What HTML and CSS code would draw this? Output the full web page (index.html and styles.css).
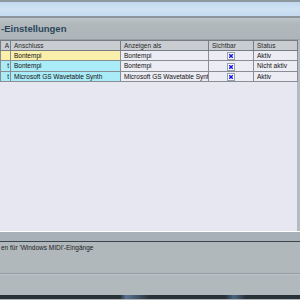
FILE: index.html
```html
<!DOCTYPE html>
<html lang="de">
<head>
    <meta charset="UTF-8">
    <title>MIDI-Einstellungen</title>
    <link rel="stylesheet" href="styles.css">
</head>
<body>

    <div class="window">
        <div class="top-strip"></div>
        <div class="title-bar"></div>
        <div class="heading">-Einstellungen</div>

        <div class="list-area">
            <table class="ports">
                <colgroup>
                    <col class="c-a">
                    <col class="c-port">
                    <col class="c-name">
                    <col class="c-vis">
                    <col class="c-state">
                </colgroup>
                <tr class="head">
                    <th class="clip">A</th>
                    <th>Anschluss</th>
                    <th>Anzeigen als</th>
                    <th>Sichtbar</th>
                    <th>Status</th>
                </tr>
                <tr class="yellow">
                    <td class="clip"></td>
                    <td>Bontempi</td>
                    <td class="plain">Bontempi</td>
                    <td class="plain check"><svg class="box" viewBox="0 0 8 8"><rect x="0.5" y="0.5" width="7" height="7" fill="#fff" stroke="#98a0aa"/><path d="M2.2 2.2L5.8 5.8M5.8 2.2L2.2 5.8" stroke="#1414e6" stroke-width="1.5"/></svg></td>
                    <td class="plain">Aktiv</td>
                </tr>
                <tr class="cyan">
                    <td class="clip">t</td>
                    <td>Bontempi</td>
                    <td class="plain">Bontempi</td>
                    <td class="plain check"><svg class="box" viewBox="0 0 8 8"><rect x="0.5" y="0.5" width="7" height="7" fill="#fff" stroke="#98a0aa"/><path d="M2.2 2.2L5.8 5.8M5.8 2.2L2.2 5.8" stroke="#1414e6" stroke-width="1.5"/></svg></td>
                    <td class="plain">Nicht aktiv</td>
                </tr>
                <tr class="cyan">
                    <td class="clip">t</td>
                    <td>Microsoft GS Wavetable Synth</td>
                    <td class="plain">Microsoft GS Wavetable Synth</td>
                    <td class="plain check"><svg class="box" viewBox="0 0 8 8"><rect x="0.5" y="0.5" width="7" height="7" fill="#fff" stroke="#98a0aa"/><path d="M2.2 2.2L5.8 5.8M5.8 2.2L2.2 5.8" stroke="#1414e6" stroke-width="1.5"/></svg></td>
                    <td class="plain">Aktiv</td>
                </tr>
            </table>
        </div>

        <div class="sep"></div>
        <div class="info">en für 'Windows MIDI'-Eingänge</div>
        <div class="footer"></div>
        <div class="taskbar"></div>
    </div>

</body>
</html>
```

FILE: styles.css
```css
body {
    margin: 0;
    font-family: "Liberation Sans", Arial, sans-serif;
    background-color: #b0b8bc;
}

.window {
    width: 300px;
    height: 300px;
    display: flex;
    flex-direction: column;
    overflow: hidden;
}

.top-strip {
    height: 2px;
    background-color: #8e979e;
}

.title-bar {
    height: 14px;
    background: linear-gradient(#c2d8ee, #d0e2f4 50%, #c4daf0);
}

.heading {
    height: 21px;
    border-top: 2px solid #8c959b;
    border-bottom: 1px solid #98a0a6;
    background: linear-gradient(#bcc4c8, #b0b8bc 30%, #adb5b9);
    color: #2b4659;
    font-weight: bold;
    font-size: 9.5px;
    line-height: 22px;
    padding-left: 1px;
}

.list-area {
    height: 191px;
    background-color: #e7e7f1;
    border-right: 3px solid #b4bcc0;
}

.ports {
    width: 297px;
    border-collapse: collapse;
    table-layout: fixed;
    font-size: 6.5px;
    color: #111;
}

.c-a { width: 10px; }
.c-port { width: 110px; }
.c-name { width: 88px; }
.c-vis { width: 45px; }
.c-state { width: 44px; }

.ports th,
.ports td {
    height: 9px;
    padding: 0 0 0 3px;
    line-height: 9px;
    border: 1px solid #8a8e94;
    text-align: left;
    font-weight: normal;
    white-space: nowrap;
    overflow: hidden;
}

.ports .head th {
    background-color: #c9cdd1;
    border-color: #777c82;
    color: #2a2a2a;
}

.ports .clip {
    padding: 0 1px 0 0;
    text-align: right;
}

.yellow td { background-color: #f9eeaa; }
.cyan td { background-color: #a9ebf6; }

.ports td.plain {
    background-color: #ececf4;
}

.ports td.check {
    text-align: center;
    padding: 0;
}

.box {
    display: inline-block;
    width: 8px;
    height: 8px;
    vertical-align: middle;
}

.sep {
    height: 9px;
    border-top: 1px solid #fff;
    border-bottom: 1px solid #3c444c;
    background-color: #a9b1b8;
}

.info {
    height: 31px;
    font-size: 6.5px;
    color: #222;
    line-height: 12px;
    padding-left: 1px;
    background-color: #b0b8bc;
}

.footer {
    height: 21px;
    border-top: 1px solid #959da2;
    box-shadow: inset 0 1px 0 #bec5c9;
    background-color: #b1b9bd;
}

.taskbar {
    height: 4px;
    background: linear-gradient(90deg, #283038 40%, #5a7390 42%, #283038 50%, #283038 75%, #4a6480 78%, #283038 82%);
}
```
